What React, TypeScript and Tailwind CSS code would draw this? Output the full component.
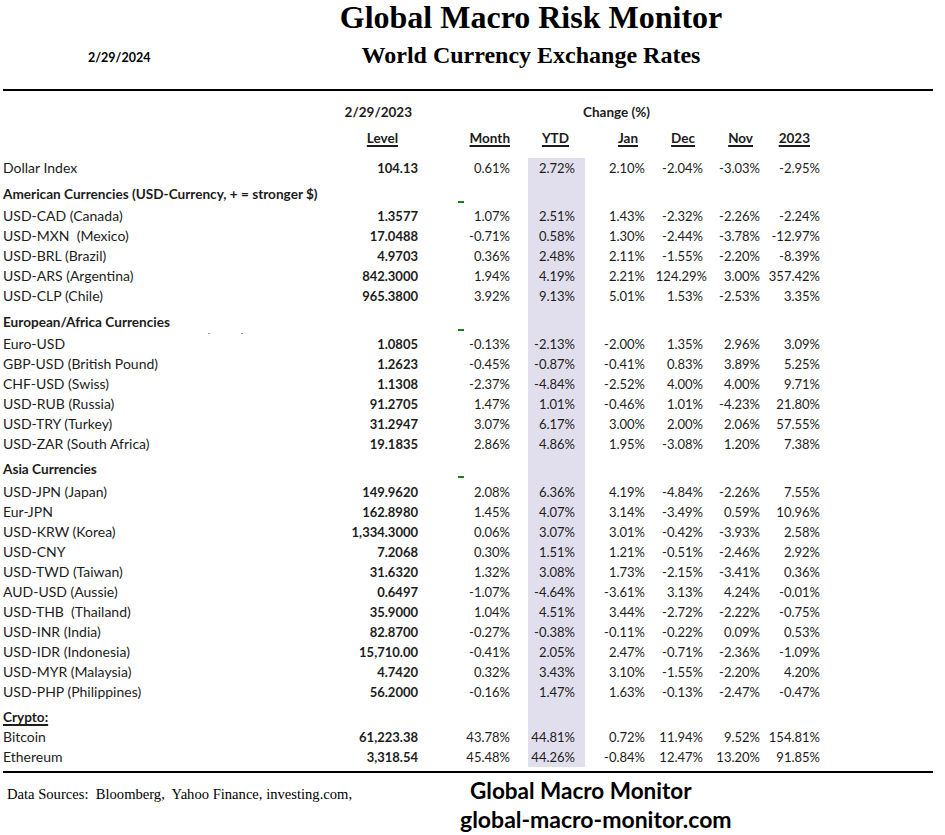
import React from "react";

type Row = [string, string, string, string, string, string, string, string];

type Section = {
  title?: string;
  underline?: boolean;
  dash?: boolean;
  dots?: boolean;
  h?: string;
  rows: Row[];
};

const sections: Section[] = [
  {
    rows: [["Dollar Index", "104.13", "0.61%", "2.72%", "2.10%", "-2.04%", "-3.03%", "-2.95%"]],
  },
  {
    title: "American Currencies (USD-Currency, + = stronger $)",
    dash: true,
    h: "h-[28px] pb-[2px]",
    rows: [
      ["USD-CAD (Canada)", "1.3577", "1.07%", "2.51%", "1.43%", "-2.32%", "-2.26%", "-2.24%"],
      ["USD-MXN  (Mexico)", "17.0488", "-0.71%", "0.58%", "1.30%", "-2.44%", "-3.78%", "-12.97%"],
      ["USD-BRL (Brazil)", "4.9703", "0.36%", "2.48%", "2.11%", "-1.55%", "-2.20%", "-8.39%"],
      ["USD-ARS (Argentina)", "842.3000", "1.94%", "4.19%", "2.21%", "124.29%", "3.00%", "357.42%"],
      ["USD-CLP (Chile)", "965.3800", "3.92%", "9.13%", "5.01%", "1.53%", "-2.53%", "3.35%"],
    ],
  },
  {
    title: "European/Africa Currencies",
    dash: true,
    dots: true,
    h: "h-[28px] pb-[2px]",
    rows: [
      ["Euro-USD", "1.0805", "-0.13%", "-2.13%", "-2.00%", "1.35%", "2.96%", "3.09%"],
      ["GBP-USD (British Pound)", "1.2623", "-0.45%", "-0.87%", "-0.41%", "0.83%", "3.89%", "5.25%"],
      ["CHF-USD (Swiss)", "1.1308", "-2.37%", "-4.84%", "-2.52%", "4.00%", "4.00%", "9.71%"],
      ["USD-RUB (Russia)", "91.2705", "1.47%", "1.01%", "-0.46%", "1.01%", "-4.23%", "21.80%"],
      ["USD-TRY (Turkey)", "31.2947", "3.07%", "6.17%", "3.00%", "2.00%", "2.06%", "57.55%"],
      ["USD-ZAR (South Africa)", "19.1835", "2.86%", "4.86%", "1.95%", "-3.08%", "1.20%", "7.38%"],
    ],
  },
  {
    title: "Asia Currencies",
    dash: true,
    h: "h-[28px] pb-[3px]",
    rows: [
      ["USD-JPN (Japan)", "149.9620", "2.08%", "6.36%", "4.19%", "-4.84%", "-2.26%", "7.55%"],
      ["Eur-JPN", "162.8980", "1.45%", "4.07%", "3.14%", "-3.49%", "0.59%", "10.96%"],
      ["USD-KRW (Korea)", "1,334.3000", "0.06%", "3.07%", "3.01%", "-0.42%", "-3.93%", "2.58%"],
      ["USD-CNY", "7.2068", "0.30%", "1.51%", "1.21%", "-0.51%", "-2.46%", "2.92%"],
      ["USD-TWD (Taiwan)", "31.6320", "1.32%", "3.08%", "1.73%", "-2.15%", "-3.41%", "0.36%"],
      ["AUD-USD (Aussie)", "0.6497", "-1.07%", "-4.64%", "-3.61%", "3.13%", "4.24%", "-0.01%"],
      ["USD-THB  (Thailand)", "35.9000", "1.04%", "4.51%", "3.44%", "-2.72%", "-2.22%", "-0.75%"],
      ["USD-INR (India)", "82.8700", "-0.27%", "-0.38%", "-0.11%", "-0.22%", "0.09%", "0.53%"],
      ["USD-IDR (Indonesia)", "15,710.00", "-0.41%", "2.05%", "2.47%", "-0.71%", "-2.36%", "-1.09%"],
      ["USD-MYR (Malaysia)", "4.7420", "0.32%", "3.43%", "3.10%", "-1.55%", "-2.20%", "4.20%"],
      ["USD-PHP (Philippines)", "56.2000", "-0.16%", "1.47%", "1.63%", "-0.13%", "-2.47%", "-0.47%"],
    ],
  },
  {
    title: "Crypto:",
    underline: true,
    h: "h-[25px]",
    rows: [
      ["Bitcoin", "61,223.38", "43.78%", "44.81%", "0.72%", "11.94%", "9.52%", "154.81%"],
      ["Ethereum", "3,318.54", "45.48%", "44.26%", "-0.84%", "12.47%", "13.20%", "91.85%"],
    ],
  },
];

const grid = "grid grid-cols-[327px_88px_92px_18px_57px_60px_58px_57px_60px]";

// wide values spill a little past the column edge, as in the sheet
const wide = (v: string) => (v.replace("-", "").length > 6 ? "-mr-[4px]" : "");

function DataRow({ r }: { r: Row }) {
  return (
    <div className={`${grid} h-[20px] items-center text-[13px]`}>
      <div className="whitespace-pre text-[14px]">{r[0]}</div>
      <div className="text-right font-bold">{r[1]}</div>
      <div className="text-right">{r[2]}</div>
      <div />
      <div className="h-full bg-[#e1dfed] pr-[10px] text-right leading-[20px]">{r[3]}</div>
      <div className="text-right">{r[4]}</div>
      <div className={`text-right ${wide(r[5])}`}>{r[5]}</div>
      <div className="text-right">{r[6]}</div>
      <div className="text-right">{r[7]}</div>
    </div>
  );
}

function Heading({ s }: { s: Section }) {
  return (
    <div className={`${grid} ${s.h} items-end`}>
      <div className={`relative text-[13.6px] font-bold ${s.underline ? "underline decoration-2 underline-offset-2" : ""}`}>
        {s.title}
        {s.dots && (
          <>
            <span className="absolute left-[205px] bottom-[-2px] h-[1px] w-[2px] bg-gray-400" />
            <span className="absolute left-[238px] bottom-[-2px] h-[1px] w-[2px] bg-gray-400" />
          </>
        )}
      </div>
      <div />
      <div className="flex h-full items-end">
        {s.dash && <span className="mb-[1px] ml-[40px] h-[2px] w-[6px] bg-[#1e7a1e]" />}
      </div>
      <div />
      <div className="-mb-[3px] h-[calc(100%+3px)] self-stretch bg-[#e1dfed]" />
      <div />
      <div />
      <div />
      <div />
    </div>
  );
}

export default function App() {
  return (
    <div className="h-[835px] w-[945px] bg-white font-['Lato',sans-serif] text-[14px] leading-[20px] text-[#1c1c1c]">
      <div className="flex h-[89px]">
        <div className="w-[331px] pl-[88px] pt-[48px] text-[12.5px] font-bold text-black">2/29/2024</div>
        <div className="w-[400px] pt-[1px] text-center font-['Liberation_Serif',serif] font-bold text-black">
          <div className="text-[32px] leading-[32px]">Global Macro Risk Monitor</div>
          <div className="mt-[9px] text-[24px] leading-[26px]">World Currency Exchange Rates</div>
        </div>
      </div>
      <div className="mx-[3px] h-[2px] w-[930px] bg-black" />

      <div className="pl-[3px] text-[13.5px]">
        <div className={`${grid} mt-[11px] h-[20px] items-center font-bold`}>
          <div />
          <div className="pr-[6px] text-right">2/29/2023</div>
          <div />
          <div />
          <div className="col-span-3 pl-[2px] text-center">Change (%)</div>
          <div />
          <div />
        </div>
        <div className={`${grid} mt-[6px] h-[20px] items-center font-bold underline decoration-2 underline-offset-2`}>
          <div />
          <div className="pr-[20px] text-right">Level</div>
          <div className="text-right">Month</div>
          <div />
          <div className="pr-[16px] text-right">YTD</div>
          <div className="pr-[7px] text-right">Jan</div>
          <div className="pr-[8px] text-right">Dec</div>
          <div className="pr-[7px] text-right">Nov</div>
          <div className="pr-[10px] text-right">2023</div>
        </div>

        <div className="mt-[10px]">
          {sections.map((s, i) => (
            <div key={i}>
              {s.title && <Heading s={s} />}
              {s.rows.map((r) => (
                <DataRow key={r[0]} r={r} />
              ))}
            </div>
          ))}
        </div>
      </div>

      <div className="mx-[3px] mt-[4px] h-[2px] w-[930px] bg-black" />

      <div className="flex">
        <div className="w-[460px] whitespace-pre pl-[7px] pt-[12px] font-['Liberation_Serif',serif] text-[14.6px] leading-[18px] text-black">
          {"Data Sources:  Bloomberg,  Yahoo Finance, investing.com,"}
        </div>
        <div className="font-bold text-black">
          <div className="pl-[10px] pt-[4px] text-[22.5px] leading-[27px]">Global Macro Monitor</div>
          <div className="mt-[2px] text-[23px] leading-[27px]">global-macro-monitor.com</div>
        </div>
      </div>
    </div>
  );
}
